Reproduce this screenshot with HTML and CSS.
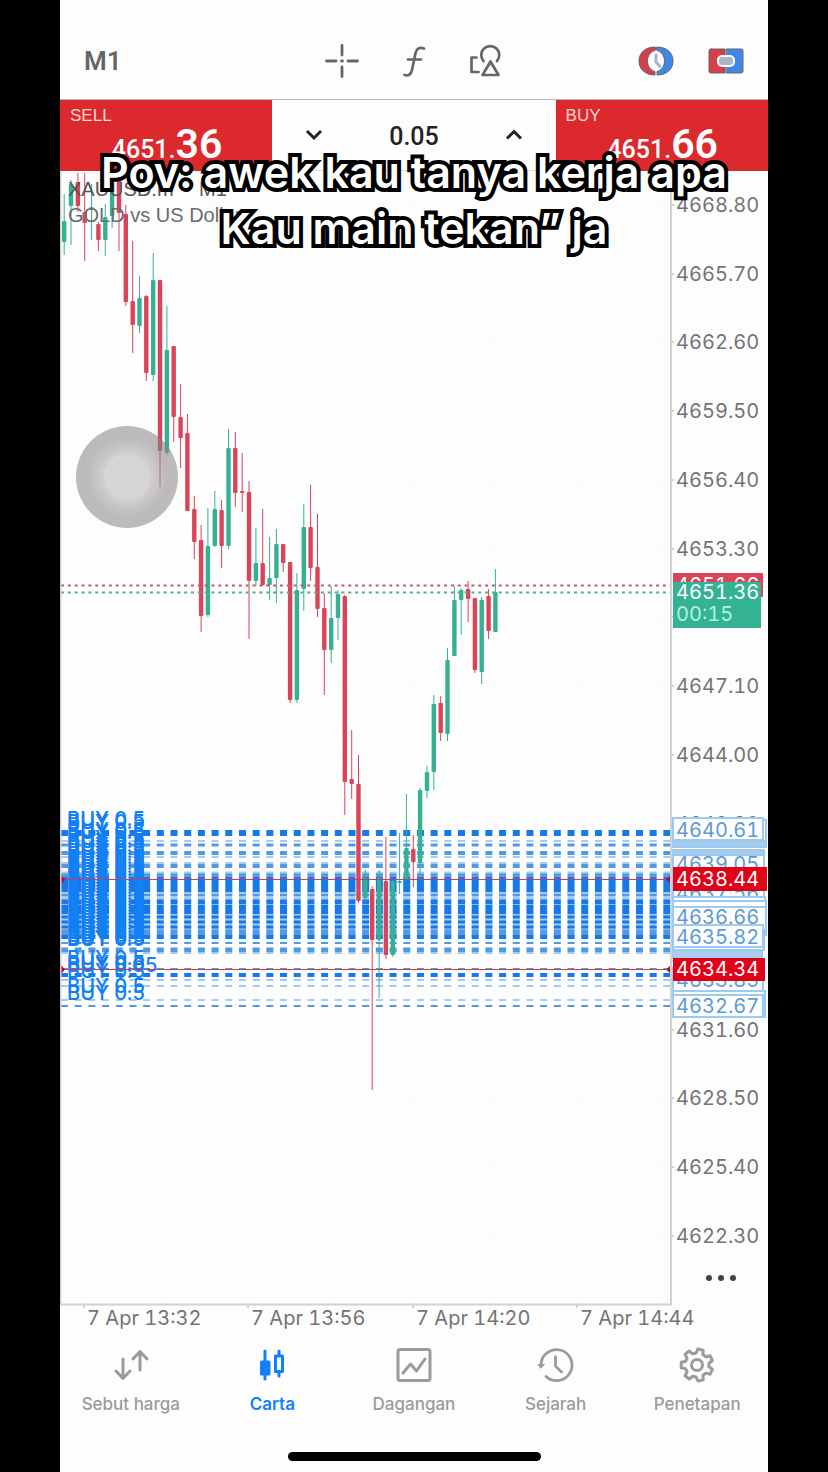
FILE: index.html
```html
<!DOCTYPE html>
<html lang="ms">
<head>
  <meta charset="UTF-8">
  <meta name="viewport" content="width=device-width, initial-scale=1">
  <title>Carta XAUUSD</title>
  <link rel="stylesheet" href="styles.css">
</head>
<body>

  <main class="app">
    <header class="toolbar">
      <button class="timeframe">M1</button>
      <div class="tools">
        <button aria-label="Crosshair">
          <svg class="icon" viewBox="0 0 36 36" stroke-width="2.800">
            <path d="M18 2.500v9.500M18 24v9.500M2.500 18H12M24 18h9.500M17.500 18h1"/>
          </svg>
        </button>
        <button aria-label="Indicators">
          <svg class="icon" viewBox="0 0 36 36" stroke-width="2.700">
            <path d="M28 5.500c-4.500-1.500-7.500 0-8.500 4.500l-3.500 17c-1 4.500-3.500 6-7.500 5M12 16.500h13"/>
          </svg>
        </button>
        <button aria-label="Objects">
          <svg class="icon" viewBox="0 0 36 36" stroke-width="2.700">
            <path d="M8.500 14.500H3.500v14.500h7M15.500 18a9 9 0 1 1 13.500 0M22.500 18.500L14.500 32h16z"/>
          </svg>
        </button>
      </div>
      <div class="tools tools-right">
        <button aria-label="Depth of market">
          <svg class="icon" viewBox="0 0 36 36" stroke="none">
            <path d="M17 4C7 4 1 10 1 18s6 14 16 14v-3.500c-4.500-1-7.500-5.500-7.500-10.500S12.500 8.500 17 7.500z" fill="#d33f4b"/>
            <path d="M19 4c10 0 16 6 16 14s-6 14-16 14v-3.500c4.500-1 7.500-5.500 7.500-10.500S23.500 8.500 19 7.500z" fill="#3f86e6"/>
            <path d="M18 12v7l4 4.500" fill="none" stroke="#aab3bd" stroke-width="2.800"/>
          </svg>
        </button>
        <button aria-label="One click trading">
          <svg class="icon" viewBox="0 0 36 36" stroke="none">
            <path d="M3 6h14v24H3a2 2 0 0 1-2-2V8a2 2 0 0 1 2-2z" fill="#d33f4b"/>
            <path d="M18.500 6H33a2 2 0 0 1 2 2v20a2 2 0 0 1-2 2H18.500z" fill="#3f86e6"/>
            <rect x="10" y="13" width="16" height="10" rx="4" fill="#aab7c8" stroke="#fff" stroke-width="2"/>
          </svg>
        </button>
      </div>
    </header>

    <section class="trade">
      <button class="quote">
        <span class="side">SELL</span>
        <span class="price">4651.<b>36</b></span>
      </button>
      <div class="volume">
        <button aria-label="Decrease volume">
          <svg class="chevron" viewBox="0 0 24 24"><path d="M5 8l7 7 7-7"/></svg>
        </button>
        <input type="text" aria-label="Volume" value="0.05">
        <button aria-label="Increase volume">
          <svg class="chevron" viewBox="0 0 24 24"><path d="M5 15.500l7-7 7 7"/></svg>
        </button>
      </div>
      <button class="quote">
        <span class="side">BUY</span>
        <span class="price">4651.<b>66</b></span>
      </button>
    </section>

    <section class="chart">
      <svg id="chart" viewBox="60 171 708 1165">
        <g id="grid"></g>
        <g id="orders"></g>
        <g id="candles"></g>
        <g id="quotes"></g>
        <g id="order-labels"></g>
        <g id="levels"></g>
        <text class="symbol symbol-name" x="68" y="196">XAUUSD.m</text>
        <text class="symbol symbol-name" x="184" y="196">•</text>
        <text class="symbol symbol-name" x="199" y="196">M1</text>
        <text class="symbol" x="68" y="222">GOLD vs US Dollar</text>
        <path class="axis" d="M60.500 171V1304.500H671V171"/>
        <g id="axis-labels"></g>
        <g id="tags"></g>
      </svg>
      <button class="more" aria-label="More">
        <svg viewBox="0 0 30 8"><circle cx="3" cy="4" r="3"/><circle cx="15" cy="4" r="3"/><circle cx="27" cy="4" r="3"/></svg>
      </button>
      <button class="assistive" aria-label="AssistiveTouch"></button>
    </section>

    <nav class="tabs">
      <a href="#quotes-tab">
        <svg class="icon" viewBox="0 0 36 36" stroke-width="3">
          <path d="M10 12v19M3 24l7 7.500 7-7.500M27 23V5M20 12l7-7.500 7 7.500"/>
        </svg>
        Sebut harga
      </a>
      <a class="active" href="#chart">
        <svg class="icon" viewBox="0 0 36 36" stroke-width="3">
          <path d="M11 4v28M25 4v5M25 25v4M21.500 9h7v15.500h-7z"/>
          <path d="M7.500 15h7.500v12H7.500z" fill="currentColor"/>
        </svg>
        Carta
      </a>
      <a href="#trade-tab">
        <svg class="icon" viewBox="0 0 36 36" stroke-width="3">
          <rect x="2" y="2.500" width="32" height="31" rx="2"/>
          <path d="M7 26l7.500-9 6 7L29 12"/>
        </svg>
        Dagangan
      </a>
      <a href="#history-tab">
        <svg class="icon" viewBox="0 0 36 36" stroke-width="2.800">
          <path d="M3 18.500a15.500 15.500 0 1 1 5 11M17.500 10v9l6 6"/>
          <path d="M0 17.500h6.500L3 21z" fill="currentColor" stroke-width="1"/>
        </svg>
        Sejarah
      </a>
      <a href="#settings-tab">
        <svg class="icon" viewBox="0 0 36 36" stroke-width="3">
          <path id="gear"/>
          <circle cx="18" cy="18" r="5.500"/>
        </svg>
        Penetapan
      </a>
    </nav>

    <div class="home-bar"></div>

    <p class="caption">Pov: awek kau tanya kerja apa<br>Kau main tekan” ja</p>
  </main>

  <script>
    const NS = 'http://www.w3.org/2000/svg';

    function add(parent, tag, attrs, text) {
      const el = document.createElementNS(NS, tag);
      for (const key in attrs) el.setAttribute(key, attrs[key]);
      if (text) el.textContent = text;
      document.getElementById(parent).appendChild(el);
    }

    // Grid, price scale and time scale
    for (let i = 0; i < 16; i++) {
      const y = Math.round(205 + i * 68.73);
      add('grid', 'path', { class: 'grid-line', d: `M61 ${y}H671` });
      add('grid', 'path', { class: 'axis', d: `M671 ${y}h3` });
      if (i !== 6) {
        add('axis-labels', 'text', { class: 'label', x: 676, y: y + 7 }, (4668.8 - i * 3.1).toFixed(2));
      }
    }
    for (let i = 0; i < 8; i++) {
      const x = Math.round(84 + i * 82.2);
      add('grid', 'path', { class: 'grid-line', d: `M${x} 171V1304` });
    }
    ['13:32', '13:56', '14:20', '14:44'].forEach((time, i) => {
      const x = Math.round(84 + i * 164.4);
      add('grid', 'path', { class: 'axis', d: `M${x} 1304v4` });
      add('axis-labels', 'text', { class: 'label', x: x + 3, y: 1325 }, '7 Apr ' + time);
    });

    // Candles: up/down, high, body top, body bottom, low
    const candles = [
      ['up', 194, 221, 242, 255], ['up', 180, 184, 206, 245], ['down', 173, 182, 206, 212], ['down', 173, 212, 223, 261],
      ['up', 184, 207, 210, 240], ['down', 222, 224, 240, 251], ['up', 204, 217, 240, 256], ['up', 174, 182, 216, 228],
      ['down', 174, 180, 213, 251], ['down', 205, 214, 302, 306], ['down', 241, 301, 325, 353], ['up', 276, 298, 326, 333],
      ['down', 295, 296, 373, 381], ['up', 253, 280, 375, 381], ['down', 280, 280, 451, 487], ['up', 306, 350, 453, 455],
      ['down', 346, 346, 417, 442], ['down', 384, 417, 438, 468], ['down', 414, 433, 511, 511], ['down', 496, 509, 542, 559],
      ['down', 525, 540, 616, 632], ['up', 508, 546, 615, 617], ['up', 491, 509, 546, 547], ['down', 500, 510, 546, 568],
      ['up', 429, 448, 546, 549], ['down', 432, 448, 493, 507], ['down', 453, 491, 493, 512], ['down', 481, 492, 581, 639],
      ['up', 528, 563, 581, 586], ['down', 509, 563, 585, 586], ['up', 537, 578, 585, 600], ['up', 529, 544, 578, 603],
      ['down', 544, 544, 563, 572], ['down', 562, 562, 700, 703], ['up', 573, 590, 700, 703], ['up', 504, 527, 589, 611],
      ['down', 485, 527, 568, 581], ['down', 514, 567, 609, 617], ['down', 593, 608, 650, 695], ['up', 586, 618, 650, 663],
      ['up', 590, 594, 618, 640], ['down', 595, 596, 782, 815], ['down', 730, 779, 784, 799], ['down', 755, 784, 901, 903],
      ['up', 870, 878, 898, 902], ['down', 886, 889, 940, 1090], ['up', 870, 878, 940, 998], ['down', 837, 881, 955, 959],
      ['up', 879, 881, 955, 957], ['up', 833, 881, 883, 894], ['up', 794, 848, 879, 881], ['down', 835, 849, 862, 887],
      ['up', 788, 790, 863, 878], ['up', 766, 772, 791, 798], ['up', 695, 704, 772, 790], ['down', 696, 703, 733, 741],
      ['up', 648, 660, 734, 741], ['up', 586, 600, 656, 656], ['up', 588, 590, 600, 635], ['down', 581, 589, 599, 622],
      ['down', 598, 598, 670, 673], ['up', 597, 600, 672, 684], ['down', 589, 596, 631, 639], ['up', 569, 592, 632, 632]
    ];
    candles.forEach(([dir, high, top, bottom, low], i) => {
      const x = (64.2 + i * 6.845).toFixed(1);
      add('candles', 'path', { class: 'wick ' + dir, d: `M${x} ${high}V${low}` });
      add('candles', 'rect', { class: 'body ' + dir, x: x - 2.2, y: top, width: 4.4, height: bottom - top, rx: 1 });
    });

    // Open buy positions, merged into bands: y, thickness, shade
    const bands = [
      [833, 6, 'strong'], [841, 2, 'light'], [845, 3, 'mid'], [853, 4, 'mid'], [857, 2, 'light'],
      [863, 2, 'light'], [866, 4, 'mid'], [873, 3, 'light'], [875, 3, 'mid'], [885, 17, 'strong'], [896, 8, 'light'],
      [895, 2, 'mid'], [902, 5, 'strong'], [910, 10, 'strong'], [922, 16, 'light'], [917, 3, 'strong'],
      [922, 3, 'strong'], [927, 3, 'strong'], [933, 7, 'mid'], [937, 4, 'strong'], [943, 2, 'mid'],
      [948, 2, 'light'], [950, 4, 'mid'], [953, 2, 'light'], [969, 2, 'mid'], [975, 4, 'strong'],
      [980, 2, 'light'], [986, 2, 'light'], [1000, 1, 'mid'], [1006, 2, 'mid']
    ];
    bands.forEach(([y, size, shade]) => {
      add('orders', 'path', { class: 'order ' + shade, d: `M61 ${y}H670`, 'stroke-width': size });
    });

    const labelRows = [826, 829, 837, 839, 845, 848];
    for (let y = 852; y < 946; y += 3) labelRows.push(y);
    labelRows.push(946, 965, 970, 978, 993, 1000);
    labelRows.forEach(y => add('order-labels', 'text', { class: 'order-label', x: 67, y }, 'BUY 0.5'));
    add('order-labels', 'text', { class: 'order-label', x: 67, y: 972 }, 'BUY 0.05');

    // Bid and ask
    add('quotes', 'path', { class: 'quote-line ask', d: 'M61 585.5H670' });
    add('quotes', 'path', { class: 'quote-line bid', d: 'M61 592.5H670' });

    // Stop levels with end markers
    [879, 969].forEach(y => {
      add('levels', 'path', { class: 'level', d: `M61 ${y}.5H671` });
      add('levels', 'path', { class: 'level-mark', d: `M61 ${y - 4}l4 4.5-4 4.5zM671 ${y - 4}l-5 4.5 5 4.5z` });
    });

    // Tags on the price scale, later ones cover earlier ones
    const tags = [
      ['ask-tag', 573, 90, 24, '4651.66', 592],
      ['bid-tag', 582, 88, 46, '4651.36', 599],
      ['buy-tag', 820, 93, 25],
      ['buy-tag', 818, 90, 22, '4640.61', 837],
      ['buy-tag fill', 841, 93, 6],
      ['buy-tag fill', 850, 91, 5],
      ['buy-tag', 855, 91, 24, '4639.05', 871],
      ['buy-tag', 876, 91, 23, '4637.56', 900],
      ['buy-tag', 897, 92, 23, '4636.97', 917],
      ['buy-tag', 901, 93, 34],
      ['buy-tag', 907, 93, 23, '4636.66', 924],
      ['buy-tag', 932, 91, 18],
      ['buy-tag', 925, 90, 22, '4635.82', 944],
      ['buy-tag fill', 950, 89, 8],
      ['buy-tag', 968, 90, 23, '4633.85', 987],
      ['buy-tag', 991, 92, 26, '4632.97', 1009],
      ['buy-tag', 995, 90, 22, '4632.67', 1013],
      ['stop-tag', 867, 94, 24, '4638.44', 886],
      ['stop-tag', 958, 92, 23, '4634.34', 976]
    ];
    tags.forEach(([kind, y, width, height, text, baseline]) => {
      add('tags', 'rect', { class: kind, x: 673, y, width, height });
      if (text) add('tags', 'text', { class: 'label ' + kind + '-text', x: 676, y: baseline }, text);
    });
    add('tags', 'text', { class: 'label bid-tag-text timer', x: 676, y: 621 }, '00:15');

    // Gear outline, seven teeth
    let gear = '';
    for (let i = 0; i < 7; i++) {
      [[-0.3, 12], [-0.17, 16], [0.17, 16], [0.3, 12]].forEach(([offset, r]) => {
        const a = i * Math.PI * 2 / 7 + offset - 1.35;
        gear += (gear ? 'L' : 'M') + (18 + r * Math.cos(a)).toFixed(1) + ' ' + (18 + r * Math.sin(a)).toFixed(1);
      });
    }
    document.getElementById('gear').setAttribute('d', gear + 'Z');
  </script>

</body>
</html>
```
FILE: styles.css
```css
* {
  box-sizing: border-box;
}
body {
  margin: 0;
  padding: 0 60px;
  background-color: #000;
  font-family: Inter, sans-serif;
}
button {
  padding: 0;
  border: none;
  background: none;
  color: inherit;
  cursor: pointer;
}
svg {
  display: block;
}
.app {
  position: relative;
  min-height: 100vh;
  background-color: #fefdfe;
}
.icon {
  width: 36px;
  height: 36px;
  fill: none;
  stroke: currentColor;
  stroke-linejoin: round;
  stroke-linecap: round;
}

/* Toolbar */
.toolbar {
  display: grid;
  grid-template-columns: 1fr auto 1fr;
  align-items: center;
  height: 100px;
  padding: 22px 24px 0;
  border-bottom: 1px solid #b9b9b9;
  color: #666;
}
.timeframe {
  justify-self: start;
  font: 600 26px Roboto, sans-serif;
}
.tools {
  display: flex;
  gap: 36px;
}
.tools-right {
  justify-self: end;
  gap: 34px;
}

/* One click trading */
.trade {
  display: grid;
  grid-template-columns: 3fr 4fr 3fr;
  height: 71px;
}
.quote {
  display: flex;
  flex-direction: column;
  padding: 6px 50px 0 10px;
  background-color: #dc292e;
  color: #fff;
  text-align: left;
}
.side {
  color: #ffd9d2;
  font: 17px/20px "Liberation Sans", Arial, sans-serif;
}
.price {
  align-self: flex-end;
  font: 500 25px/36px Roboto, sans-serif;
}
.price b {
  font-size: 41px;
  font-weight: 600;
}
.volume {
  display: flex;
  align-items: center;
  justify-content: space-between;
  padding: 0 30px;
  border-bottom: 1px solid #ddd;
  color: #222;
}
.volume input {
  width: 100px;
  padding: 3px 0 0;
  border: none;
  background: none;
  color: #222;
  font: 500 25px Roboto, sans-serif;
  text-align: center;
}
.chevron {
  width: 24px;
  height: 24px;
  fill: none;
  stroke: currentColor;
  stroke-width: 3;
}

/* Chart */
.chart {
  position: relative;
}
#chart {
  width: 100%;
  height: auto;
}
.axis {
  fill: none;
  stroke: #d2d2d2;
  stroke-width: 2;
}
.grid-line {
  stroke: #faf8f9;
  stroke-dasharray: 14 14;
}
.label {
  fill: #747474;
  font-size: 20px;
  font-variant-numeric: tabular-nums;
}
.symbol {
  fill: #6c6c6c;
  font: 20px "Liberation Sans", Arial, sans-serif;
}
.symbol-name {
  fill: #555;
}
.up {
  fill: #35b192;
  stroke: #35b192;
}
.down {
  fill: #da4458;
  stroke: #da4458;
}
.wick {
  stroke-width: 1px;
}
.body {
  stroke: none;
}
.order {
  stroke-dasharray: 7 6.69;
}
.strong {
  stroke: #1679ea;
}
.mid {
  stroke: #5299e4;
}
.light {
  stroke: #a5cbf0;
}
.order-label {
  fill: #1180f5;
  font-size: 20px;
  font-weight: 500;
}
.quote-line {
  stroke-width: 2px;
  stroke-dasharray: 3 3.84;
}
.ask {
  stroke: #bb5f74;
}
.bid {
  stroke: #58ad8c;
}
.level {
  stroke: #c2405c;
  stroke-width: 1px;
}
.level-mark {
  fill: #b01030;
}
.ask-tag {
  fill: #da4458;
}
.bid-tag {
  fill: #33b394;
}
.stop-tag {
  fill: #e00218;
}
.ask-tag-text, .bid-tag-text, .stop-tag-text {
  fill: #fff;
}
.timer {
  fill: #b8f0df;
}
.buy-tag {
  fill: #fefdfe;
  stroke: #9ccbf2;
  stroke-width: 2px;
}
.fill {
  fill: #a9cdef;
}
.buy-tag-text {
  fill: #5f9ad2;
}
.more {
  position: absolute;
  right: 32px;
  bottom: 54px;
  fill: #444;
}
.more svg {
  width: 30px;
  height: 8px;
}
.assistive {
  position: absolute;
  left: 16px;
  top: 255px;
  width: 102px;
  height: 102px;
  border-radius: 50%;
  background: radial-gradient(circle, #d6d4d6 0 23px, rgba(170, 166, 170, 0.55) 24px, rgba(135, 131, 135, 0.55) 40px);
}

/* Bottom tabs */
.tabs {
  display: flex;
  padding-top: 11px;
}
.tabs a {
  flex: 1;
  display: flex;
  flex-direction: column;
  align-items: center;
  gap: 10px;
  color: #9b9b9b;
  font-size: 17px;
  font-weight: 500;
  line-height: 22px;
  text-decoration: none;
}
.tabs .active {
  color: #1280f8;
  font-weight: 600;
}
.home-bar {
  width: 253px;
  height: 9px;
  margin: 37px auto 0;
  border-radius: 5px;
  background-color: #000;
}

/* Video caption over the screen */
.caption {
  position: absolute;
  top: 144px;
  left: 0;
  right: 0;
  margin: 0;
  color: #fff;
  font-size: 43px;
  font-weight: 600;
  line-height: 56px;
  text-align: center;
  white-space: nowrap;
  -webkit-text-stroke: 8px #000;
  paint-order: stroke fill;
  stroke-linejoin: round;
  pointer-events: none;
}
```
